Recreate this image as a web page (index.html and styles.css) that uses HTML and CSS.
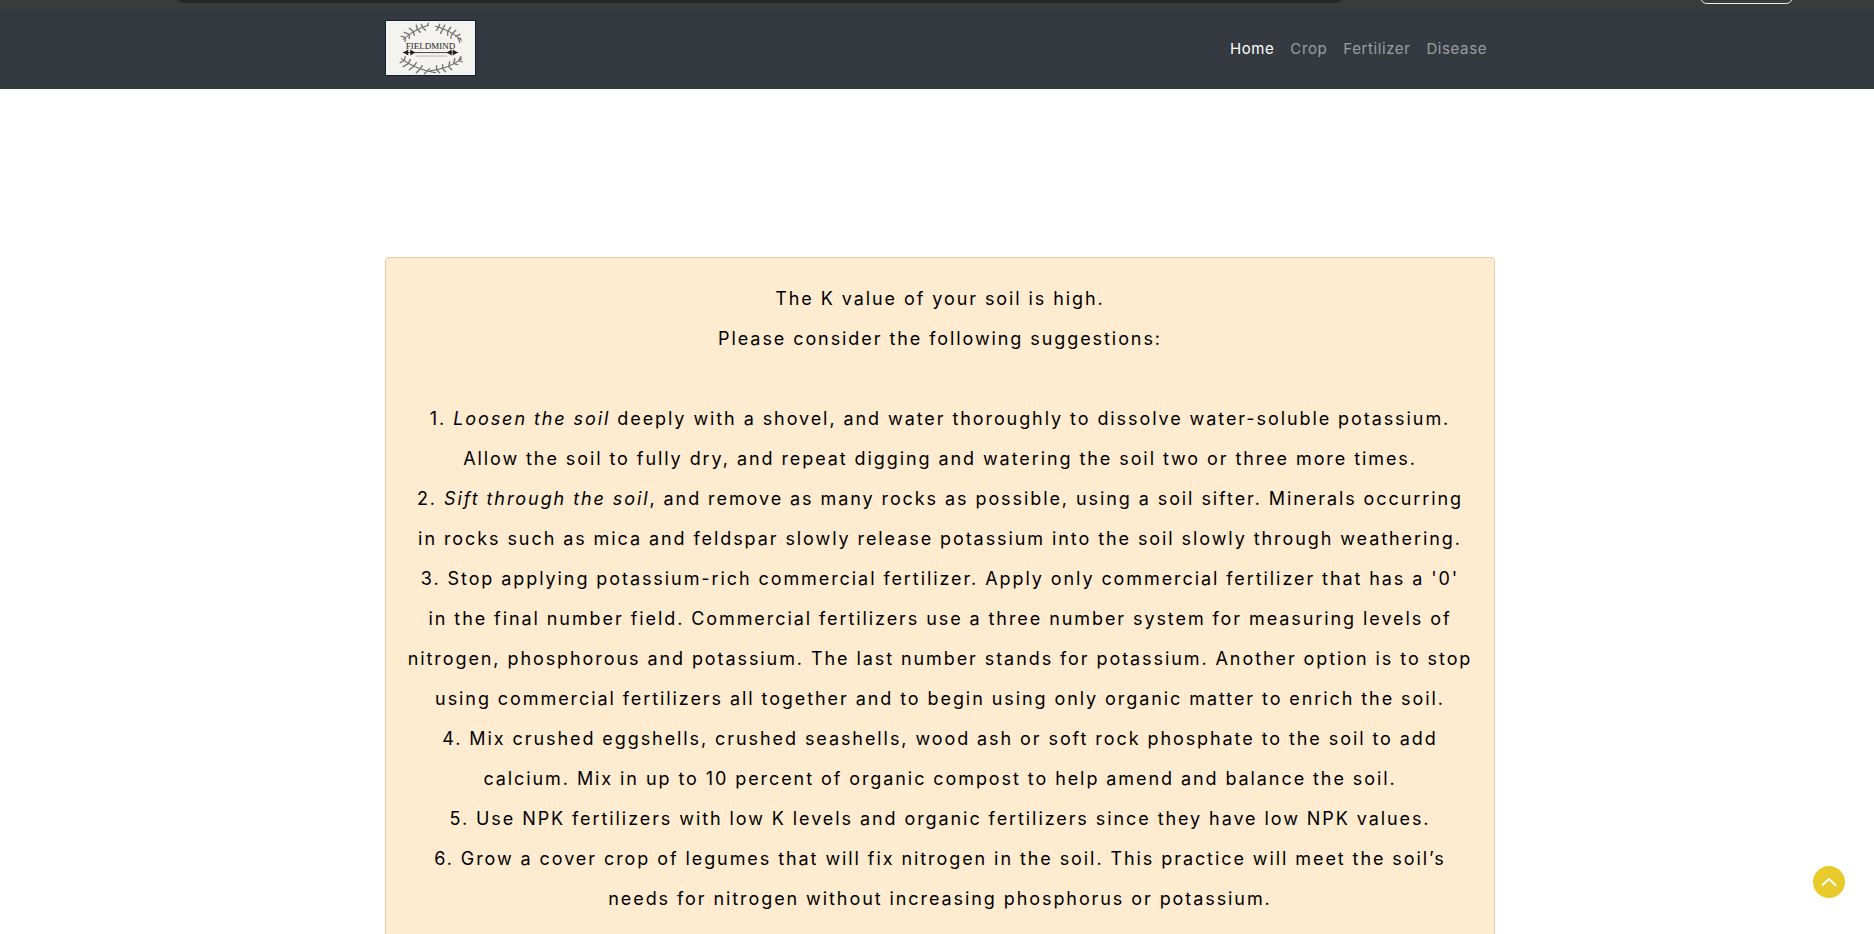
FILE: index.html
```html
<!DOCTYPE html>
<html lang="en">
<head>
<meta charset="utf-8">
<title>FieldMind</title>
<link rel="stylesheet" href="styles.css">
</head>
<body>
<div class="chrome">
  <div class="chrome-search"></div>
  <div class="chrome-btn"></div>
</div>
<nav class="navbar">
  <div class="logo">
    <svg class="wreath" viewBox="0 0 88 53" fill="none" stroke="#4a4a4a" stroke-width="0.9" stroke-linecap="round">
      <path d="M17 18 Q28 8 42 4"/>
      <path d="M49 5 Q64 9 75 19"/>
      <path d="M19 16l-4-1M19 16l0 4M23 13l-5-2M23 13l0 4M27 10l-4-3M27 10l1 4M31 8l-1-4M31 8l3 3M36 6l-1-3M36 6l3 3M41 4l1-2" stroke="#777" stroke-width="1.400"/>
      <path d="M52 6l1-3M52 6l-2 3M56 8l2-4M56 8l-2 4M61 10l3-4M61 10l0 4M65 13l4-4M65 13l-1 4M69 15l4-2M71 17l3 0M72 18l1 3" stroke="#777" stroke-width="1.400"/>
      <path d="M15 37 Q30 48 49 51"/>
      <path d="M44 49 Q62 47 75 37"/>
      <path d="M18 39l-4 2M18 39l1-4M22 42l-5 3M22 42l2-4M27 45l-4 3M27 45l3-4M33 48l-3 3M33 48l3-4M40 50l-2 2M40 50l3-3" stroke="#777" stroke-width="1.400"/>
      <path d="M50 48l3 3M50 48l0-4M56 47l3 3M56 47l0-4M62 45l3 3M62 45l1-5M67 42l4 1M67 42l1-5M72 39l3 1M72 39l2-4" stroke="#777" stroke-width="1.400"/>
      <path d="M17 31H71" stroke="#222" stroke-width="0.8"/>
      <path d="M17 31l5-3v6zM29 31l-5-3v6zM71 31l-5-3v6zM60 31l5-3v6z" fill="#222" stroke="none"/>
      <path d="M30 34.500H60" stroke="#aaa" stroke-width="0.8"/>
    </svg>
    <span class="logo-text">FIELDMIND</span>
  </div>
  <ul class="nav-links">
    <li><a class="nav-link active" href="#">Home</a></li>
    <li><a class="nav-link" href="#">Crop</a></li>
    <li><a class="nav-link" href="#">Fertilizer</a></li>
    <li><a class="nav-link" href="#">Disease</a></li>
  </ul>
</nav>
<main class="main">
  <div class="alert">
    The K value of your soil is high.<br>
    Please consider the following suggestions:<br>
    <br>
    1. <i>Loosen the soil</i> deeply with a shovel, and water thoroughly to dissolve water-soluble potassium.<br>
    Allow the soil to fully dry, and repeat digging and watering the soil two or three more times.<br>
    2. <i>Sift through the soil</i>, and remove as many rocks as possible, using a soil sifter. Minerals occurring<br>
    in rocks such as mica and feldspar slowly release potassium into the soil slowly through weathering.<br>
    3. Stop applying potassium-rich commercial fertilizer. Apply only commercial fertilizer that has a '0'<br>
    in the final number field. Commercial fertilizers use a three number system for measuring levels of<br>
    nitrogen, phosphorous and potassium. The last number stands for potassium. Another option is to stop<br>
    using commercial fertilizers all together and to begin using only organic matter to enrich the soil.<br>
    4. Mix crushed eggshells, crushed seashells, wood ash or soft rock phosphate to the soil to add<br>
    calcium. Mix in up to 10 percent of organic compost to help amend and balance the soil.<br>
    5. Use NPK fertilizers with low K levels and organic fertilizers since they have low NPK values.<br>
    6. Grow a cover crop of legumes that will fix nitrogen in the soil. This practice will meet the soil’s<br>
    needs for nitrogen without increasing phosphorus or potassium.
  </div>
</main>
<a class="back-top" href="#">
  <svg viewBox="0 0 16 16" width="16" height="16" fill="none" stroke="#fff" stroke-width="2" stroke-linecap="round" stroke-linejoin="round"><path d="M1.500 11 8 5l6.500 6"/></svg>
</a>
</body>
</html>
```
FILE: styles.css
```css
html, body {
  margin: 0;
  height: 934px;
  overflow: hidden;
  background: #fff;
}
body {
  font-family: Inter, "Liberation Sans", sans-serif;
  color: #000;
}
.chrome {
  height: 9px;
  background: #3b3b3b;
  display: flex;
  align-items: flex-start;
  padding-left: 177px;
  overflow: hidden;
}
.chrome-search {
  width: 1165px;
  height: 12px;
  margin-top: -9px;
  background: #282828;
  border-radius: 10px;
}
.chrome-btn {
  width: 91px;
  height: 12px;
  margin-top: -10px;
  margin-left: 358px;
  background: #3b3b3b;
  border: 1px solid #eee;
  border-radius: 10px;
}
.navbar {
  height: 80px;
  background: #343a40;
  display: flex;
  align-items: center;
  justify-content: space-between;
  padding: 0 387px 0 385px;
  box-sizing: border-box;
  width: 1874px;
}
.logo {
  position: relative;
  width: 89px;
  height: 54px;
  background: #f5f3ef;
  border: 1px solid #0f2233;
  margin-top: -2px;
  flex: none;
}
.wreath {
  width: 89px;
  height: 54px;
  display: block;
  filter: blur(0.5px);
}
.logo-text {
  position: absolute;
  left: 0;
  right: 0;
  top: 20px;
  text-align: center;
  font-family: "Liberation Serif", serif;
  font-size: 9px;
  line-height: 10px;
  color: #222;
}
.nav-links {
  list-style: none;
  margin: 0;
  padding: 0;
  display: flex;
  gap: 16px;
}
.nav-link {
  font-size: 15px;
  line-height: 24px;
  letter-spacing: 0.6px;
  color: rgba(255, 255, 255, 0.5);
  text-decoration: none;
  display: block;
}
.nav-link.active {
  color: #fff;
}
.main {
  padding: 168px 0 0 385px;
}
.alert {
  width: 1108px;
  box-sizing: content-box;
  border: 1px solid #e3cda8;
  border-radius: 4px;
  background: #feebd0;
  padding: 21px 0 20px;
  text-align: center;
  font-size: 18px;
  line-height: 40px;
  letter-spacing: 1.920px;
  white-space: nowrap;
}
.back-top {
  position: fixed;
  left: 1813px;
  top: 866px;
  width: 32px;
  height: 32px;
  border-radius: 50%;
  background: #e8cb2a;
  display: flex;
  align-items: center;
  justify-content: center;
}
```
